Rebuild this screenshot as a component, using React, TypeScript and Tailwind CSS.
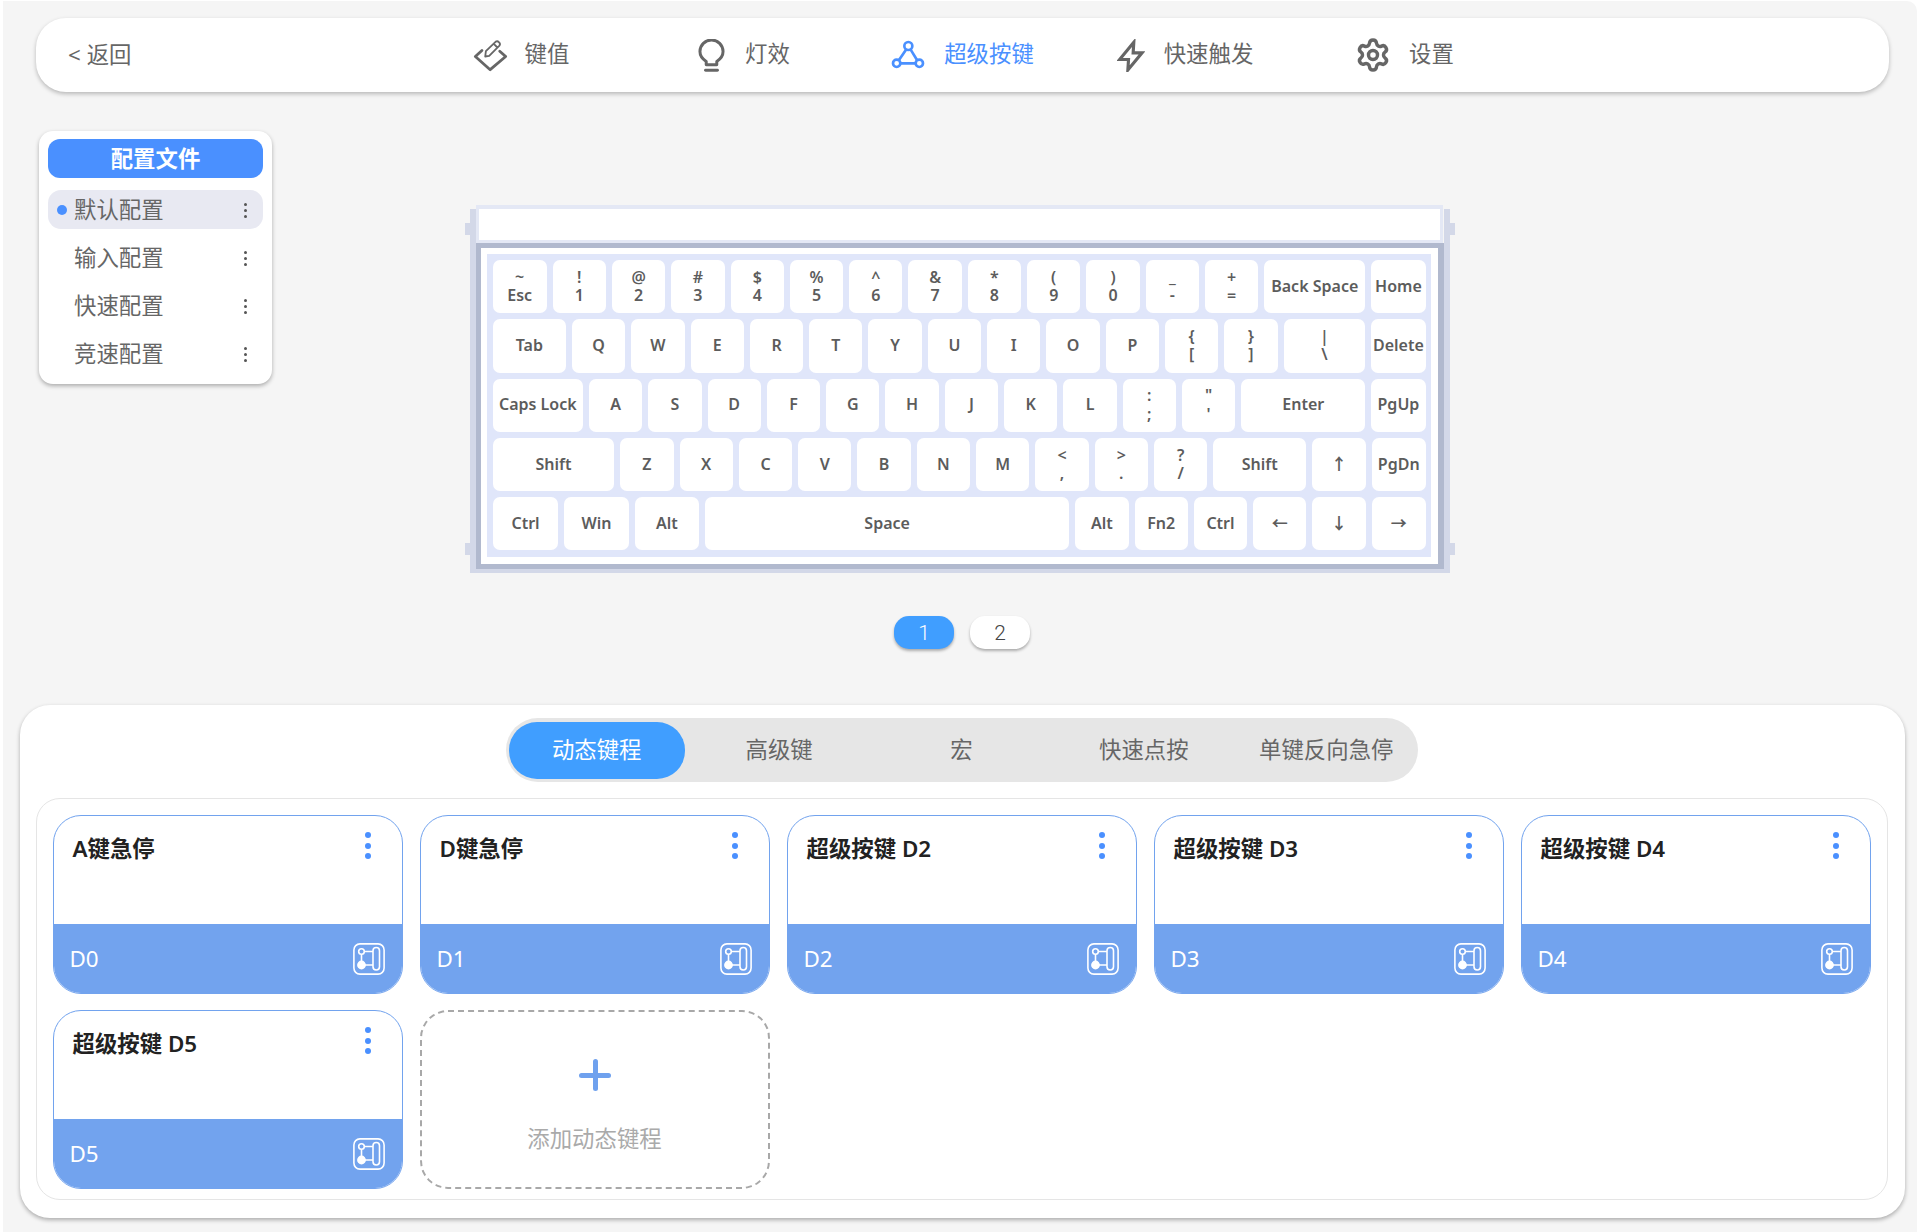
import React from "react";
import { Settings } from "lucide-react";

const font = "font-['Noto_Sans','Noto_Sans_CJK_SC',sans-serif]";

type K = { t: string; s?: string; w: string };
const u = "w-[53.3px]";
const rows: K[][] = [
  [
    { t: "Esc", s: "~", w: "w-[54px]" },
    { t: "1", s: "!", w: u },
    { t: "2", s: "@", w: u },
    { t: "3", s: "#", w: u },
    { t: "4", s: "$", w: u },
    { t: "5", s: "%", w: u },
    { t: "6", s: "^", w: u },
    { t: "7", s: "&", w: u },
    { t: "8", s: "*", w: u },
    { t: "9", s: "(", w: u },
    { t: "0", s: ")", w: u },
    { t: "-", s: "_", w: u },
    { t: "=", s: "+", w: u },
    { t: "Back Space", w: "w-[101px]" },
    { t: "Home", w: "w-[54.4px]" },
  ],
  [
    { t: "Tab", w: "w-[73.3px]" },
    ..."QWERTYUIOP".split("").map((t) => ({ t, w: u })),
    { t: "[", s: "{", w: u },
    { t: "]", s: "}", w: u },
    { t: "\\", s: "|", w: "w-[81.7px]" },
    { t: "Delete", w: "w-[54.4px]" },
  ],
  [
    { t: "Caps Lock", w: "w-[90.3px]" },
    ..."ASDFGHJKL".split("").map((t) => ({ t, w: u })),
    { t: ";", s: ":", w: u },
    { t: "'", s: '"', w: u },
    { t: "Enter", w: "w-[124px]" },
    { t: "PgUp", w: "w-[54.4px]" },
  ],
  [
    { t: "Shift", w: "w-[121.6px]" },
    ..."ZXCVBNM".split("").map((t) => ({ t, w: u })),
    { t: ",", s: "<", w: u },
    { t: ".", s: ">", w: u },
    { t: "/", s: "?", w: u },
    { t: "Shift", w: "w-[93px]" },
    { t: "↑", w: u },
    { t: "PgDn", w: "w-[54.4px]" },
  ],
  [
    { t: "Ctrl", w: "w-[65.7px]" },
    { t: "Win", w: "w-[64.3px]" },
    { t: "Alt", w: "w-[64.3px]" },
    { t: "Space", w: "w-[364.3px]" },
    { t: "Alt", w: u },
    { t: "Fn2", w: u },
    { t: "Ctrl", w: u },
    { t: "←", w: u },
    { t: "↓", w: u },
    { t: "→", w: "w-[54px]" },
  ],
];

function KeyIcon() {
  return (
    <svg width="38" height="33" viewBox="20 25 115 100" fill="none" stroke="#666" strokeLinecap="round" strokeLinejoin="round">
      <path d="M50 60 L30 78 L75 118 L122 78 L104 62" strokeWidth="8.5" />
      <path d="M62 62 L92 33 Q97 30 102 35 Q107 40 103 45 L72 76 L60 78 Z M86 40 L96 50" strokeWidth="5.5" />
    </svg>
  );
}
function BulbIcon() {
  return (
    <svg width="27" height="33" viewBox="700 24 80 100" fill="none" stroke="#666" strokeWidth="9" strokeLinecap="round" strokeLinejoin="round">
      <path d="M724 102 v-10 c-11 -7 -19 -17 -19 -30 a35 35 0 0 1 70 0 c0 13 -8 23 -19 30 v10 z" />
      <path d="M722 119 h36" />
    </svg>
  );
}
function NodesIcon() {
  return (
    <svg width="35" height="30" viewBox="20 28 105 90" fill="none" stroke="#4a90ff" strokeWidth="8">
      <circle cx="72" cy="46" r="12" />
      <circle cx="37" cy="98" r="11" />
      <circle cx="105" cy="98" r="11" />
      <path d="M65 57 L44 88 M79 57 L98 88 M48 98 H94" />
    </svg>
  );
}
function ZapIcon() {
  return (
    <svg width="28" height="33" viewBox="695 24 85 100" fill="none" stroke="#666" strokeWidth="9.5" strokeLinejoin="miter">
      <path d="M746 34 L703 86 H730 L728 118 L771 66 H744 Z" />
    </svg>
  );
}
function NodeBoxIcon() {
  return (
    <svg width="32" height="32" viewBox="0 0 32 32" fill="none" stroke="#fff" strokeWidth="1.6">
      <rect x="0.9" y="0.9" width="30.2" height="30.2" rx="6" />
      <circle cx="8.5" cy="8.5" r="2.8" />
      <circle cx="8.5" cy="22" r="3.6" fill="#fff" />
      <path d="M8.5 11.3 V18.4 M11.3 8.5 H20 M12 22 H20" />
      <rect x="20" y="4.5" width="6.5" height="22.5" rx="3.25" />
    </svg>
  );
}

const nav = [
  { l: "键值", i: <KeyIcon />, c: "gap-[15px]" },
  { l: "灯效", i: <BulbIcon />, c: "gap-[20px] pl-[5px]" },
  { l: "超级按键", i: <NodesIcon />, on: true, c: "gap-[18px]" },
  { l: "快速触发", i: <ZapIcon />, c: "gap-[19px] pl-[3px]" },
  { l: "设置", i: <Settings size={36} strokeWidth={2.3} color="#666" />, c: "gap-[18px]" },
];

const profiles = ["默认配置", "输入配置", "快速配置", "竞速配置"];
const tabs = ["动态键程", "高级键", "宏", "快速点按", "单键反向急停"];
const cards = [
  ["A键急停", "D0"],
  ["D键急停", "D1"],
  ["超级按键 D2", "D2"],
  ["超级按键 D3", "D3"],
  ["超级按键 D4", "D4"],
  ["超级按键 D5", "D5"],
];

function Key({ k }: { k: K }) {
  return (
    <div className={`${k.w} h-[53.3px] shrink-0 rounded-[7px] bg-white flex flex-col items-center justify-center pb-[1px] text-[16px] font-semibold text-[#5c5c5c] leading-[18.5px] whitespace-nowrap`}>
      {k.s && <span>{k.s}</span>}
      <span>{k.t}</span>
    </div>
  );
}

export default function App() {
  return (
    <div className={`${font} w-[1920px] h-[1232px] bg-white pl-[3px] pt-[1px] overflow-hidden`}>
      <div className="w-[1914px] h-[1231px] bg-[#f5f5f5] rounded-tr-[10px] pt-[17px] pl-[33px]">
        {/* top bar */}
        <div className="w-[1853px] h-[74px] bg-white rounded-[30px] shadow-[0_2px_4px_rgba(0,0,0,0.25)] flex items-center relative">
          <span className="absolute left-[32px] text-[22.4px] text-[#666]">&lt; 返回</span>
          <div className="mx-auto flex">
            {nav.map((n) => (
              <div key={n.l} className={`w-[221px] flex items-center justify-center ${n.c} text-[22.4px] ${n.on ? "text-[#4a90ff]" : "text-[#666]"}`}>
                {n.i}
                <span className="pb-[2px]">{n.l}</span>
              </div>
            ))}
          </div>
        </div>

        {/* middle */}
        <div className="flex items-start mt-[39px]">
          {/* sidebar */}
          <div className="ml-[3px] w-[233px] h-[253px] bg-white rounded-[14px] shadow-[0_2px_4px_rgba(0,0,0,0.3)] px-[9px] pt-[8px]">
            <div className="h-[39px] rounded-[12px] bg-[#4a90ff] text-white text-[22.4px] font-bold flex items-center justify-center">配置文件</div>
            <div className="mt-[12px] flex flex-col gap-[9px]">
              {profiles.map((p, i) => (
                <div key={p} className={`h-[39px] rounded-[13px] flex items-center text-[22.4px] text-[#666] ${i === 0 ? "bg-[#e8e9f2]" : ""}`}>
                  <span className={`w-[10px] h-[10px] rounded-full ml-[9px] mr-[7px] ${i === 0 ? "bg-[#4a90ff]" : ""}`} />
                  <span>{p}</span>
                  <span className="ml-auto mr-[16px] flex flex-col gap-[3px] mt-[2px]">
                    <i className="block w-[3px] h-[3px] rounded-full bg-[#555]" />
                    <i className="block w-[3px] h-[3px] rounded-full bg-[#555]" />
                    <i className="block w-[3px] h-[3px] rounded-full bg-[#555]" />
                  </span>
                </div>
              ))}
            </div>
          </div>

          {/* keyboard column */}
          <div className="ml-[193px] mt-[74px] flex flex-col items-center">
            <div className="flex items-start">
              <div className="w-[5px] h-[332px] mt-[18px] flex flex-col justify-between">
                <div className="h-[12px] bg-[#d3d8e8]" />
                <div className="h-[12px] bg-[#d3d8e8]" />
              </div>
              <div className="w-[6px] h-[364px] mt-[4px] bg-[#d3d8e8]" />
              <div className="w-[968px]">
                <div className="h-[38px] w-[967px] border-[3px] border-t-[4px] border-[#e4e8f5] bg-white" />
                <div className="w-[968px] h-[326px] border-[5px] border-r-[6px] border-[#b1b9ce] bg-white p-[6px]">
                  <div className="w-[944px] h-[303px] bg-[#e0e6fa] pl-[5.7px] pt-[6px] flex flex-col gap-[6px]">
                    {rows.map((r, i) => (
                      <div key={i} className="flex gap-[6px]">
                        {r.map((k, j) => (
                          <Key key={j} k={k} />
                        ))}
                      </div>
                    ))}
                  </div>
                </div>
                <div className="h-[4px] bg-[#d3d8e8]" />
              </div>
              <div className="w-[6px] h-[364px] mt-[4px] bg-[#d3d8e8]" />
              <div className="w-[5px] h-[332px] mt-[18px] flex flex-col justify-between">
                <div className="h-[12px] bg-[#d3d8e8]" />
                <div className="h-[12px] bg-[#d3d8e8]" />
              </div>
            </div>
            <div className="mt-[43px] ml-[4px] flex gap-[16px] text-[21px] font-['Roboto',sans-serif] font-light">
              <div className="w-[60px] h-[33px] pt-[2px] rounded-[15px] bg-[#409eff] text-white flex items-center justify-center shadow-[0_2px_3px_rgba(0,0,0,0.3)]">1</div>
              <div className="w-[60px] h-[33px] pt-[2px] rounded-[15px] bg-white text-[#444] flex items-center justify-center shadow-[0_2px_3px_rgba(0,0,0,0.3)]">2</div>
            </div>
          </div>
        </div>

        {/* bottom panel */}
        <div className="-ml-[16px] mt-[56px] w-[1885px] h-[513px] bg-white rounded-[30px] shadow-[0_2px_4px_rgba(0,0,0,0.3)] pt-[13px] pr-[2px] flex flex-col items-center">
          <div className="w-[912px] h-[64px] bg-[#e6e6e6] rounded-[32px] flex items-center">
            {tabs.map((t, i) => (
              <div key={t} className={`flex items-center justify-center text-[22.4px] ${i === 0 ? "w-[176.4px] h-[57px] mx-[3px] rounded-[28px] bg-[#409eff] text-white" : "w-[182.4px] text-[#666]"}`}>
                {t}
              </div>
            ))}
          </div>
          <div className="mt-[16px] w-[1852px] h-[402px] border border-[#e5e5e5] rounded-[24px] p-[16px] grid grid-cols-5 gap-x-[17px] gap-y-[16px] content-start">
            {cards.map(([title, id]) => (
              <div key={id} className="h-[179px] rounded-[28px] border border-[#72a3ee] overflow-hidden flex flex-col bg-white">
                <div className="flex-1 relative pl-[19px] pt-[16px] text-[22.4px] font-semibold text-[#222]">
                  {title}
                  <div className="absolute right-[31px] top-[16px] flex flex-col gap-[4.5px]">
                    <i className="block w-[6px] h-[6px] rounded-full bg-[#4a90ff]" />
                    <i className="block w-[6px] h-[6px] rounded-full bg-[#4a90ff]" />
                    <i className="block w-[6px] h-[6px] rounded-full bg-[#4a90ff]" />
                  </div>
                </div>
                <div className="h-[69px] bg-[#72a3ee] flex items-center justify-between pl-[16px] pr-[17px] text-[22.4px] text-white">
                  <span>{id}</span>
                  <NodeBoxIcon />
                </div>
              </div>
            ))}
            <div className="h-[179px] rounded-[28px] border-[2.5px] border-dashed border-[#a8a8a8] flex flex-col items-center pt-[47px]">
              <div className="relative w-[32px] h-[32px]">
                <div className="absolute left-0 top-[14px] w-[32px] h-[5px] rounded-full bg-[#6fa1ee]" />
                <div className="absolute left-[14px] top-0 w-[5px] h-[32px] rounded-full bg-[#6fa1ee]" />
              </div>
              <div className="mt-[31px] text-[22.4px] text-[#aaa]">添加动态键程</div>
            </div>
          </div>
        </div>
      </div>
    </div>
  );
}
